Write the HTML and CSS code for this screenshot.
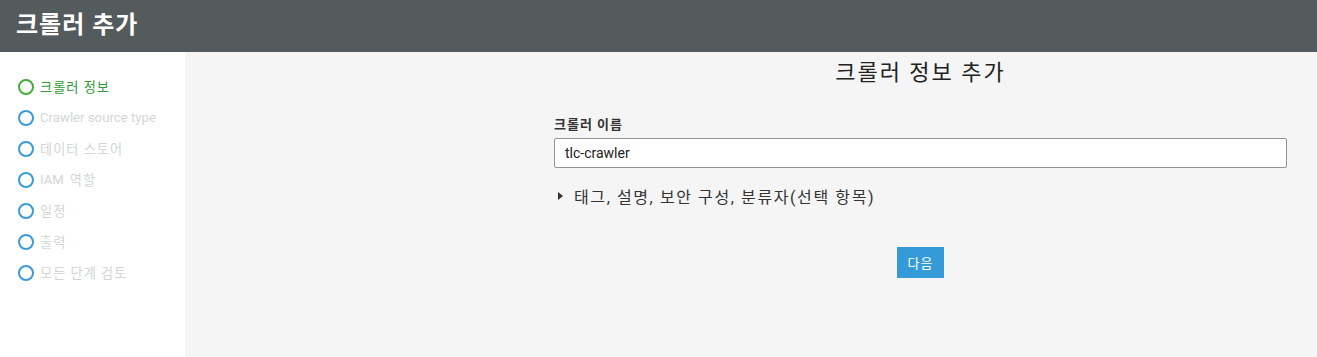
FILE: index.html
```html
<!DOCTYPE html>
<html lang="ko">
<head>
    <meta charset="UTF-8">
    <meta name="viewport" content="width=device-width, initial-scale=1.0">
    <title>크롤러 추가</title>
    <link rel="stylesheet" href="styles.css">
</head>
<body>

    <header class="page_header">
        <h1 class="page_title">크롤러 추가</h1>
    </header>

    <div class="wizard">
        <nav class="steps">
            <ul>
                <li class="step active"><span class="dot"></span><span class="ko">크롤러 정보</span></li>
                <li class="step"><span class="dot"></span>Crawler source type</li>
                <li class="step"><span class="dot"></span><span class="ko">데이터 스토어</span></li>
                <li class="step"><span class="dot"></span>IAM <span class="ko">역할</span></li>
                <li class="step"><span class="dot"></span><span class="ko">일정</span></li>
                <li class="step"><span class="dot"></span><span class="ko">출력</span></li>
                <li class="step"><span class="dot"></span><span class="ko">모든 단계 검토</span></li>
            </ul>
        </nav>

        <section class="content">
            <div class="form">
                <h2 class="form_title">크롤러 정보 추가</h2>

                <label for="crawlerName">크롤러 이름</label>
                <input id="crawlerName" class="text_input" type="text" value="tlc-crawler">

                <div class="expander">
                    <span class="caret"></span>
                    태그, 설명, 보안 구성, 분류자(선택 항목)
                </div>

                <div class="actions">
                    <button class="btn_next" type="button">다음</button>
                </div>
            </div>
        </section>
    </div>

</body>
</html>
```

FILE: styles.css
```css
* {
    padding: 0;
    margin: 0;
    box-sizing: border-box;
    font-family: Roboto, "Noto Sans CJK KR", sans-serif;
}
ul {
    list-style-type: none;
}
body {
    height: 357px;
    display: flex;
    flex-direction: column;
    background: #f4f5f4;
}
.page_header {
    height: 52px;
    padding: 0 16px;
    background: #545b5c;
    display: flex;
    align-items: center;
}
.page_title {
    font-size: 24px;
    font-weight: bold;
    letter-spacing: 1px;
    color: #fff;
    margin-top: -8px;
}
.wizard {
    flex: 1;
    display: flex;
}
.steps {
    width: 185px;
    background: #fff;
    padding: 19px 0 0 18px;
}
.step {
    height: 31px;
    display: flex;
    align-items: center;
    gap: 6px;
    font-size: 13.2px;
    color: #d3d6d6;
}
.step .ko {
    letter-spacing: 1px;
}
.step .dot {
    width: 16px;
    height: 16px;
    border: 2px solid #3d9ad8;
    border-radius: 50%;
}
.step.active {
    color: #2f9a3a;
}
.step.active .dot {
    border-color: #45ad3b;
}
.content {
    flex: 1;
    padding: 0 30px 0 369px;
}
.form_title {
    margin-top: 2px;
    height: 43px;
    font-size: 22px;
    font-weight: normal;
    letter-spacing: 2px;
    color: #222;
    text-align: center;
}
.form label {
    display: block;
    margin-top: 17px;
    font-size: 13px;
    font-weight: bold;
    letter-spacing: 1px;
    color: #333;
}
.text_input {
    display: block;
    width: 100%;
    height: 30px;
    margin-top: 5px;
    padding: 0 10px;
    border: 1px solid #8f9494;
    border-radius: 2px;
    background: #fff;
    outline: 0;
    font-size: 14px;
    color: #222;
}
.expander {
    margin-top: 16px;
    display: flex;
    align-items: center;
    gap: 11px;
    padding-left: 4px;
    font-size: 16px;
    letter-spacing: 1.6px;
    color: #333;
}
.caret {
    width: 0;
    height: 0;
    border-top: 4px solid transparent;
    border-bottom: 4px solid transparent;
    border-left: 5px solid #333;
}
.actions {
    margin-top: 39px;
    display: flex;
    justify-content: center;
}
.btn_next {
    width: 47px;
    height: 31px;
    border: 0;
    background: #359bd8;
    color: #fff;
    font-size: 13px;
    letter-spacing: 1px;
}
```
